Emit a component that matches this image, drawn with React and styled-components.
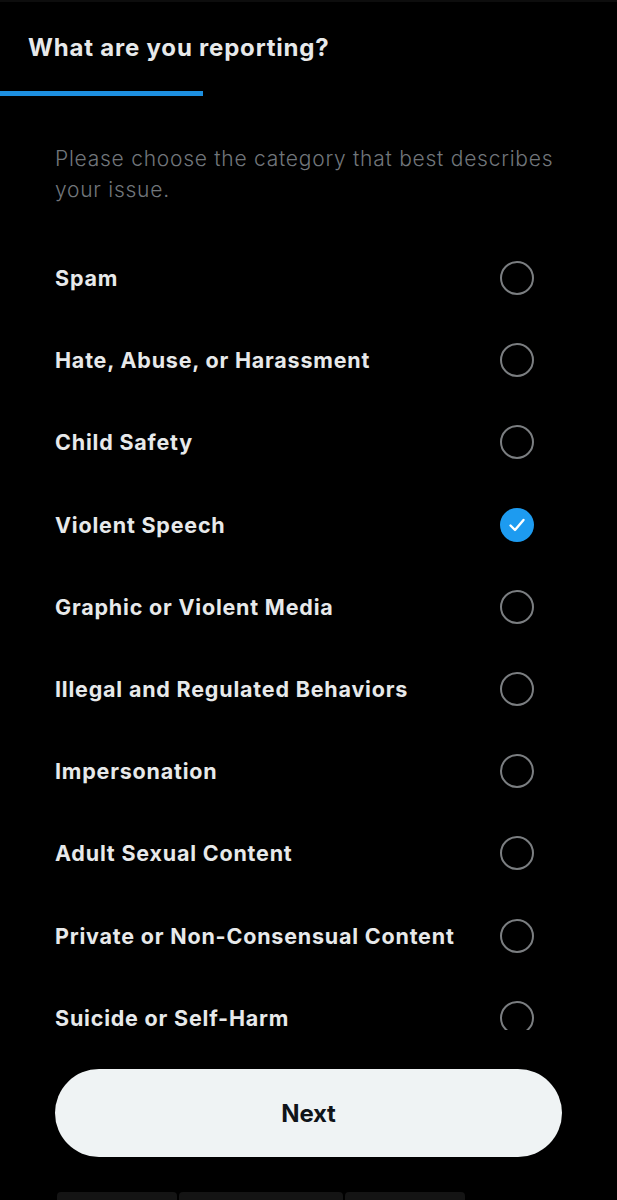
import React from "react";
import styled, { createGlobalStyle } from "styled-components";

const GlobalStyle = createGlobalStyle`
  html, body {
    margin: 0;
    padding: 0;
    background: #000;
  }
  body {
    font-family: Inter, "Noto Sans", "Liberation Sans", sans-serif;
  }
`;

const Screen = styled.div`
  width: 617px;
  height: 1200px;
  background: #000;
  display: flex;
  flex-direction: column;
  overflow: hidden;
  border-top: 2px solid #0d0d0d;
  box-sizing: border-box;
`;

const Header = styled.header`
  height: 89px;
  box-sizing: border-box;
  padding: 32px 28px 0;
`;

const Title = styled.h1`
  margin: 0;
  color: #e7e9ea;
  font-size: 24px;
  font-weight: 700;
  line-height: 28px;
  letter-spacing: 0.8px;
`;

const Progress = styled.div`
  height: 5px;
  background: transparent;
  .fill {
    height: 100%;
    background: #1d8fe0;
  }
`;

const Scroller = styled.div`
  height: 935px;
  overflow: hidden;
  padding: 47px 83px 0 55px;
  box-sizing: border-box;
`;

const Description = styled.p`
  margin: 0 0 32px;
  color: #71767b;
  font-size: 21px;
  font-weight: 300;
  line-height: 31px;
  letter-spacing: 0.75px;
  width: 515px;
`;

const Row = styled.label`
  height: 82.2px;
  display: flex;
  align-items: center;
  justify-content: space-between;
  cursor: pointer;
`;

const RowText = styled.span`
  color: #e7e9ea;
  font-size: 21.5px;
  font-weight: 700;
  line-height: 20px;
  letter-spacing: 0.8px;
`;

const Radio = styled.span`
  width: 34px;
  height: 34px;
  border-radius: 50%;
  box-sizing: border-box;
  flex-shrink: 0;
  display: flex;
  align-items: center;
  justify-content: center;
  border: ${(p) => (p.$checked ? "none" : "2.5px solid #7b7e81")};
  background: ${(p) => (p.$checked ? "#1d9bf0" : "transparent")};
`;

const Footer = styled.footer`
  flex: 1;
  display: flex;
  flex-direction: column;
  align-items: center;
  padding-top: 39px;
  box-sizing: border-box;
`;

const NextButton = styled.button`
  width: 507px;
  height: 88px;
  border: none;
  border-radius: 44px;
  background: #eff3f4;
  color: #0f1419;
  font-family: inherit;
  font-size: 24px;
  font-weight: 700;
  letter-spacing: -0.2px;
  cursor: pointer;
`;

const Tabs = styled.div`
  margin-top: 35px;
  display: flex;
  gap: 2px;
  width: 408px;
  align-self: flex-start;
  margin-left: 57px;
`;

const Tab = styled.div`
  height: 8px;
  flex: ${(p) => p.$grow};
  background: #141414;
  border-radius: 4px 4px 0 0;
`;

const categories = [
  "Spam",
  "Hate, Abuse, or Harassment",
  "Child Safety",
  "Violent Speech",
  "Graphic or Violent Media",
  "Illegal and Regulated Behaviors",
  "Impersonation",
  "Adult Sexual Content",
  "Private or Non-Consensual Content",
  "Suicide or Self-Harm",
];

export default function App() {
  const selected = "Violent Speech";
  return (
    <>
      <GlobalStyle />
      <Screen>
        <Header>
          <Title>What are you reporting?</Title>
        </Header>
        <Progress>
          <div className="fill" style={{ width: `${(203 / 617) * 100}%` }} />
        </Progress>
        <Scroller>
          <Description>
            Please choose the category that best describes your issue.
          </Description>
          {categories.map((c) => (
            <Row key={c}>
              <RowText>{c}</RowText>
              <Radio $checked={c === selected}>
                {c === selected && (
                  <svg width="20" height="20" viewBox="0 0 20 20">
                    <path
                      d="M3.5 10.5 L8 15 L16.5 5"
                      fill="none"
                      stroke="#fff"
                      strokeWidth="2.4"
                      strokeLinecap="round"
                      strokeLinejoin="round"
                    />
                  </svg>
                )}
              </Radio>
            </Row>
          ))}
        </Scroller>
        <Footer>
          <NextButton>Next</NextButton>
          <Tabs>
            <Tab $grow={120} />
            <Tab $grow={164} />
            <Tab $grow={120} />
          </Tabs>
        </Footer>
      </Screen>
    </>
  );
}
